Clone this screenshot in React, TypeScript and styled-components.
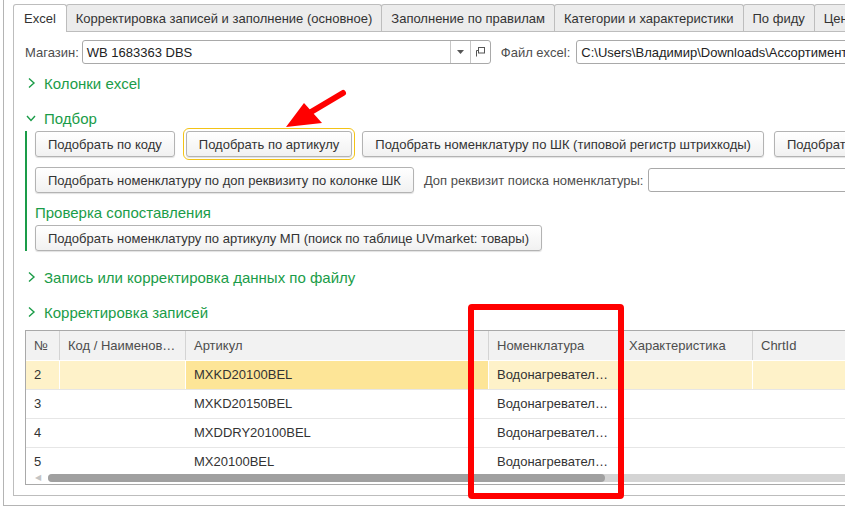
import styled, { createGlobalStyle } from "styled-components";

const GlobalStyle = createGlobalStyle`
  html, body {
    margin: 0;
    padding: 0;
    background: #fff;
    overflow: hidden;
  }
  body {
    font-family: "Liberation Sans", Arial, sans-serif;
    font-size: 13px;
    color: #333;
  }
  * { box-sizing: border-box; }
`;

const GREEN = "#1a9c48";

const Viewport = styled.div`
  position: relative;
  width: 845px;
  height: 511px;
  overflow: hidden;
  padding-left: 3px;
`;

const Window = styled.div`
  width: 1000px;
  height: 506px;
  border-left: 1px solid #b4b4b4;
  border-bottom: 1px solid #b4b4b4;
  padding: 4px 0 9px 9px;
  display: flex;
  flex-direction: column;
`;

const TabBar = styled.div`
  display: flex;
  height: 27px;
  align-items: flex-end;
  position: relative;
  z-index: 1;
`;

const Tab = styled.div<{ $active?: boolean }>`
  height: ${({ $active }) => ($active ? "28px" : "27px")};
  margin-bottom: ${({ $active }) => ($active ? "-1px" : "0")};
  align-self: flex-start;
  padding: 0 ${({ $active }) => ($active ? "10px" : "9px")};
  display: flex;
  align-items: center;
  white-space: nowrap;
  border: 1px solid #bdbdbd;
  border-bottom: none;
  border-radius: 3px 3px 0 0;
  background: ${({ $active }) => ($active ? "#fff" : "#ececec")};
  color: #333;
  font-size: 13px;
  & + & {
    margin-left: -1px;
  }
`;

const Panel = styled.div`
  flex: 1;
  border: 1px solid #bdbdbd;
  border-right: none;
  padding: 8px 0 0 10px;
  display: flex;
  flex-direction: column;
`;

const FieldRow = styled.div`
  display: flex;
  align-items: center;
  height: 24px;
`;

const InlineField = styled.div<{ $gap?: number; $ml?: number }>`
  display: flex;
  align-items: center;
  gap: ${({ $gap }) => $gap ?? 7}px;
  margin-left: ${({ $ml }) => $ml ?? 1}px;
`;

const Label = styled.span`
  color: #4d4d4d;
  white-space: nowrap;
`;

const Combo = styled.div<{ $w: number }>`
  width: ${({ $w }) => $w}px;
  height: 24px;
  border: 1px solid #a9a9a9;
  border-radius: 3px;
  display: flex;
  background: #fff;
  flex-shrink: 0;
`;

const ComboText = styled.div`
  flex: 1;
  padding-left: 4px;
  display: flex;
  align-items: center;
  color: #222;
  white-space: nowrap;
  overflow: hidden;
`;

const ComboButton = styled.div`
  width: 20px;
  border-left: 1px solid #c6c6c6;
  display: flex;
  align-items: center;
  justify-content: center;
  color: #555;
`;

const GroupHeader = styled.div<{ $mt: number }>`
  display: flex;
  align-items: center;
  height: 22px;
  margin-top: ${({ $mt }) => $mt}px;
  padding-left: 2px;
  gap: 8px;
  color: ${GREEN};
  font-size: 15px;
  white-space: nowrap;
`;

const GroupBody = styled.div`
  margin-top: 2px;
  margin-left: 1px;
  border-left: 2px solid ${GREEN};
  padding-left: 8px;
  display: flex;
  flex-direction: column;
`;

const ButtonRow = styled.div<{ $mt?: number }>`
  display: flex;
  align-items: center;
  gap: 10px;
  height: 26px;
  margin-top: ${({ $mt }) => $mt ?? 0}px;
`;

const Button = styled.div<{ $focus?: boolean }>`
  height: 26px;
  padding: 0 12px;
  display: flex;
  align-items: center;
  white-space: nowrap;
  border: 1px solid #b3b3b3;
  border-radius: 3px;
  background: linear-gradient(#ffffff, #f1f1f1);
  box-shadow: 0 1px 1px rgba(0, 0, 0, 0.12);
  color: #333;
  flex-shrink: 0;
  margin-left: ${({ $focus }) => ($focus ? "1px" : "0")};
  outline: ${({ $focus }) => ($focus ? "1px solid #f3c316" : "none")};
  outline-offset: 2px;
`;

const SubTitle = styled.div`
  margin-top: 9px;
  height: 20px;
  display: flex;
  align-items: center;
  color: ${GREEN};
  font-size: 15px;
`;

const Table = styled.div`
  position: relative;
  margin-top: 7px;
  margin-left: 1px;
  width: 900px;
  height: 155px;
  border: 1px solid #a9a9a9;
  border-right: none;
  overflow: hidden;
`;

const GRID = "34px 126px 303px 132px 132px 1fr";

const HeaderRow = styled.div`
  display: grid;
  grid-template-columns: ${GRID};
  height: 30px;
  background: #f2f2f2;
  border-bottom: 1px solid #fff;
`;

const HeadCell = styled.div`
  border-right: 1px solid #d4d4d4;
  padding: 0 8px;
  line-height: 30px;
  color: #4d4d4d;
  white-space: nowrap;
  overflow: hidden;
  text-overflow: ellipsis;
`;

const Row = styled.div<{ $selected?: boolean }>`
  display: grid;
  grid-template-columns: ${GRID};
  height: 29px;
  border-bottom: 1px solid #e6e6e6;
  background: ${({ $selected }) => ($selected ? "#fef2c9" : "#fff")};
`;

const Cell = styled.div<{ $current?: boolean }>`
  border-right: 1px solid #fff;
  padding: 0 8px;
  line-height: 28px;
  white-space: nowrap;
  overflow: hidden;
  text-overflow: ellipsis;
  color: #333;
  background: ${({ $current }) => ($current ? "#fde597" : "transparent")};
`;

const ScrollBar = styled.div`
  position: absolute;
  left: 0;
  right: 0;
  bottom: 2px;
  height: 8px;
  display: flex;
  align-items: center;
  background: #fff;
`;

const ScrollArrow = styled.div`
  width: 22px;
  padding-left: 9px;
  color: #c4c4c4;
  font-size: 8px;
  line-height: 8px;
`;

const ScrollTrack = styled.div`
  flex: 1;
  height: 8px;
  background: #d4d4d4;
  border-radius: 4px 0 0 4px;
`;

const ScrollThumb = styled.div`
  width: 557px;
  height: 8px;
  border-radius: 4px;
  background: #a0a0a0;
`;

const Highlight = styled.div`
  position: absolute;
  left: 468px;
  top: 304px;
  width: 156px;
  height: 195px;
  border: 6px solid #ff0000;
  border-radius: 4px;
  pointer-events: none;
`;

const Overlay = styled.svg`
  position: absolute;
  left: 0;
  top: 0;
  pointer-events: none;
`;

const Chevron = ({ open }: { open?: boolean }) => (
  <svg width="10" height="12" viewBox="0 0 10 12" fill="none" stroke={GREEN} strokeWidth="1.4">
    {open ? <path d="M1 4l4 4.5L9 4" /> : <path d="M3 1.5l5 4.5-5 4.5" />}
  </svg>
);

const OpenIcon = () => (
  <svg width="10" height="10" viewBox="0 0 10 10" fill="none" stroke="#555" strokeWidth="1">
    <rect x="3.5" y="0.5" width="6" height="5.5" />
    <path d="M1.5 3.5v6M1.5 3.5h2" />
  </svg>
);

const rows = [
  { n: "2", art: "MXKD20100BEL", selected: true },
  { n: "3", art: "MXKD20150BEL" },
  { n: "4", art: "MXDDRY20100BEL" },
  { n: "5", art: "MX20100BEL" },
];

const tabs = [
  "Excel",
  "Корректировка записей и заполнение (основное)",
  "Заполнение по правилам",
  "Категории и характеристики",
  "По фиду",
  "Цены",
];

export default function App() {
  return (
    <Viewport>
      <GlobalStyle />
      <Window>
        <TabBar>
          {tabs.map((t, i) => (
            <Tab key={t} $active={i === 0}>
              {t}
            </Tab>
          ))}
        </TabBar>
        <Panel>
          <FieldRow>
            <InlineField $gap={3}>
              <Label>Магазин:</Label>
              <Combo $w={409}>
                <ComboText>WB 1683363 DBS</ComboText>
                <ComboButton>
                  <svg width="7" height="4" viewBox="0 0 7 4">
                    <path d="M0 0h7L3.5 4z" fill="#555" />
                  </svg>
                </ComboButton>
                <ComboButton>
                  <OpenIcon />
                </ComboButton>
              </Combo>
            </InlineField>
            <InlineField $ml={10} $gap={6}>
              <Label>Файл excel:</Label>
              <Combo $w={400}>
                <ComboText>C:\Users\Владимир\Downloads\Ассортимент WB.xlsx</ComboText>
              </Combo>
            </InlineField>
          </FieldRow>

          <GroupHeader $mt={8}>
            <Chevron />
            Колонки excel
          </GroupHeader>

          <GroupHeader $mt={13}>
            <Chevron open />
            Подбор
          </GroupHeader>
          <GroupBody>
            <ButtonRow>
              <Button>Подобрать по коду</Button>
              <Button $focus>Подобрать по артикулу</Button>
              <Button>Подобрать номенклатуру по ШК (типовой регистр штрихкоды)</Button>
              <Button>Подобрать по наименованию</Button>
            </ButtonRow>
            <ButtonRow $mt={10}>
              <Button>Подобрать номенклатуру по доп реквизиту по колонке ШК</Button>
              <InlineField $ml={0} $gap={5}>
                <Label>Доп реквизит поиска номенклатуры:</Label>
                <Combo $w={300}>
                  <ComboText />
                </Combo>
              </InlineField>
            </ButtonRow>
            <SubTitle>Проверка сопоставления</SubTitle>
            <ButtonRow $mt={3}>
              <Button>Подобрать номенклатуру по артикулу МП (поиск по таблице UVmarket: товары)</Button>
            </ButtonRow>
          </GroupBody>

          <GroupHeader $mt={15}>
            <Chevron />
            Запись или корректировка данных по файлу
          </GroupHeader>
          <GroupHeader $mt={13}>
            <Chevron />
            Корректировка записей
          </GroupHeader>

          <Table>
            <HeaderRow>
              <HeadCell>№</HeadCell>
              <HeadCell>Код / Наименование</HeadCell>
              <HeadCell>Артикул</HeadCell>
              <HeadCell>Номенклатура</HeadCell>
              <HeadCell>Характеристика</HeadCell>
              <HeadCell>ChrtId</HeadCell>
            </HeaderRow>
            {rows.map((r) => (
              <Row key={r.n} $selected={r.selected}>
                <Cell>{r.n}</Cell>
                <Cell />
                <Cell $current={r.selected}>{r.art}</Cell>
                <Cell>Водонагреватель электрический</Cell>
                <Cell />
                <Cell />
              </Row>
            ))}
            <ScrollBar>
              <ScrollArrow>◀</ScrollArrow>
              <ScrollTrack>
                <ScrollThumb />
              </ScrollTrack>
            </ScrollBar>
          </Table>
        </Panel>
      </Window>

      <Highlight />
      <Overlay width="845" height="511" viewBox="0 0 845 511">
        <line x1="343" y1="93" x2="311" y2="112" stroke="#ff0000" strokeWidth="6" strokeLinecap="round" />
        <polygon points="286,127 304,103 322,123" fill="#ff0000" />
      </Overlay>
    </Viewport>
  );
}
